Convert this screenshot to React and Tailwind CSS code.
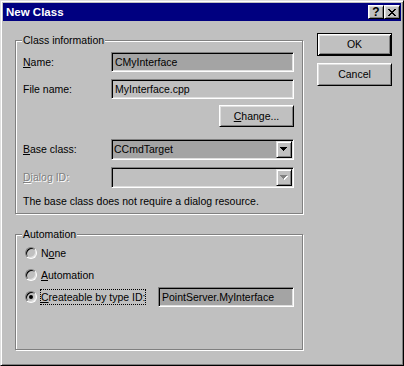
import React from "react";

const raised =
  "border border-t-white border-l-white border-r-black border-b-black shadow-[inset_1px_1px_0_#dfdfdf,inset_-1px_-1px_0_#808080]";
const sunken =
  "border border-t-[#808080] border-l-[#808080] border-r-white border-b-white shadow-[inset_1px_1px_0_#000,inset_-1px_-1px_0_#dfdfdf]";
const group =
  "relative w-[288px] border border-[#808080] shadow-[1px_1px_0_#fff,inset_1px_1px_0_#fff]";

function Arrow({ disabled }) {
  const rows = [
    [0, 7],
    [1, 5],
    [2, 3],
    [3, 1],
  ];
  return (
    <svg width="8" height="5" viewBox="0 0 8 5" shapeRendering="crispEdges">
      {disabled &&
        rows.map(([y, w], i) => (
          <rect key={"s" + i} x={y + 1} y={y + 1} width={w} height="1" fill="#fff" />
        ))}
      {rows.map(([y, w], i) => (
        <rect key={i} x={y} y={y} width={w} height="1" fill={disabled ? "#808080" : "#000"} />
      ))}
    </svg>
  );
}

function Combo({ value, disabled, bg }) {
  return (
    <div className={`flex-1 h-full flex items-stretch ${sunken} ${bg} p-[1px]`}>
      <div className="flex-1 flex items-center pl-[1px] leading-[13px]">{value}</div>
      <div className={`w-[16px] flex items-center justify-center bg-[#c0c0c0] border border-t-[#dfdfdf] border-l-[#dfdfdf] border-r-black border-b-black shadow-[inset_1px_1px_0_#fff,inset_-1px_-1px_0_#808080]`}>
        <Arrow disabled={disabled} />
      </div>
    </div>
  );
}

function Radio({ checked, label, mnemonicIndex, focused }) {
  const before = label.slice(0, mnemonicIndex);
  const m = label[mnemonicIndex];
  const after = label.slice(mnemonicIndex + 1);
  return (
    <div className="flex items-center">
      <div className="w-[12px] h-[12px] rounded-full border border-t-[#808080] border-l-[#808080] border-r-white border-b-white shadow-[inset_1px_1px_0_#000,inset_-1px_-1px_0_#dfdfdf] bg-[#c0c0c0] flex items-center justify-center">
        {checked && <div className="w-[4px] h-[4px] rounded-full bg-black" />}
      </div>
      <span
        className={`ml-[3px] h-[16px] flex items-center leading-[13px] border ${
          focused ? "border-dotted border-black" : "border-transparent"
        }`}
      >
        {before}
        <span className="underline underline-offset-[1px]">{m}</span>
        {after}
      </span>
    </div>
  );
}

export default function App() {
  return (
    <div className="w-[404px] h-[366px] bg-[#c0c0c0] font-['Liberation_Sans',Arial,sans-serif] text-[10.5px] text-black border border-t-[#dfdfdf] border-l-[#dfdfdf] border-r-black border-b-black shadow-[inset_1px_1px_0_#fff,inset_-1px_-1px_0_#808080] p-[2px] flex flex-col">
      {/* Title bar */}
      <div className="h-[18px] bg-[#000080] flex items-center justify-between pl-[3px] pr-[1px]">
        <span className="text-white font-bold text-[11.5px] leading-[14px]">New Class</span>
        <div className="flex">
          <div className={`w-[16px] h-[14px] bg-[#c0c0c0] ${raised} flex items-center justify-center font-bold text-[12px] leading-[11px]`}>
            ?
          </div>
          <div className={`w-[16px] h-[14px] bg-[#c0c0c0] ${raised} flex items-center justify-center`}>
            <svg width="8" height="7" viewBox="0 0 8 7" shapeRendering="crispEdges">
              <rect x="0" y="0" width="2" height="1" />
              <rect x="6" y="0" width="2" height="1" />
              <rect x="1" y="1" width="2" height="1" />
              <rect x="5" y="1" width="2" height="1" />
              <rect x="2" y="2" width="4" height="1" />
              <rect x="3" y="3" width="2" height="1" />
              <rect x="2" y="4" width="4" height="1" />
              <rect x="1" y="5" width="2" height="1" />
              <rect x="5" y="5" width="2" height="1" />
              <rect x="0" y="6" width="2" height="1" />
              <rect x="6" y="6" width="2" height="1" />
            </svg>
          </div>
        </div>
      </div>

      {/* Body */}
      <div className="flex pl-[12px]">
        <div className="flex flex-col">
          {/* Class information */}
          <div className={`${group} h-[174px] mt-[19px]`}>
            <span className="absolute -top-[7px] left-[6px] px-[1px] bg-[#c0c0c0] leading-[13px]">
              Class information
            </span>
            <div className="flex flex-col pt-[11px] pl-[7px] pr-[8px]">
              <div className="flex items-center h-[20px]">
                <span className="w-[88px] leading-[13px]">
                  <span className="underline underline-offset-[1px]">N</span>ame:
                </span>
                <div className={`flex-1 h-full ${sunken} bg-[#a4a4a4] flex items-center pl-[3px] leading-[13px]`}>
                  CMyInterface
                </div>
              </div>
              <div className="flex items-center h-[20px] mt-[7px]">
                <span className="w-[88px] leading-[13px]">File name:</span>
                <div className={`flex-1 h-full ${sunken} bg-[#c0c0c0] flex items-center pl-[3px] leading-[13px]`}>
                  MyInterface.cpp
                </div>
              </div>
              <div className="flex justify-end h-[22px] mt-[6px]">
                <div className={`w-[75px] h-full ${raised} flex items-center justify-center leading-[13px]`}>
                  <span>
                    <span className="underline underline-offset-[1px]">C</span>hange...
                  </span>
                </div>
              </div>
              <div className="flex items-center h-[21px] mt-[12px]">
                <span className="w-[88px] leading-[13px]">
                  <span className="underline underline-offset-[1px]">B</span>ase class:
                </span>
                <Combo value="CCmdTarget" bg="bg-[#a4a4a4]" />
              </div>
              <div className="flex items-center h-[21px] mt-[7px]">
                <span className="w-[88px] leading-[13px] text-[#808080] [text-shadow:1px_1px_0_#fff]">
                  <span className="underline underline-offset-[1px]">D</span>ialog ID:
                </span>
                <Combo value="" disabled bg="bg-[#c0c0c0]" />
              </div>
              <div className="h-[13px] leading-[13px] mt-[7px]">
                The base class does not require a dialog resource.
              </div>
            </div>
          </div>

          {/* Automation */}
          <div className={`${group} h-[116px] mt-[20px]`}>
            <span className="absolute -top-[7px] left-[6px] px-[1px] bg-[#c0c0c0] leading-[13px]">
              Automation
            </span>
            <div className="flex flex-col pt-[8px] pl-[9px] pr-[8px] gap-[2px]">
              <div className="h-[20px] flex items-center">
                <Radio label="None" mnemonicIndex={1} />
              </div>
              <div className="h-[20px] flex items-center">
                <Radio label="Automation" mnemonicIndex={0} />
              </div>
              <div className="h-[20px] flex items-center">
                <Radio label="Createable by type ID:" mnemonicIndex={0} checked focused />
                <div className={`ml-auto w-[136px] h-full ${sunken} bg-[#a4a4a4] flex items-center pl-[3px] leading-[13px]`}>
                  PointServer.MyInterface
                </div>
              </div>
            </div>
          </div>
        </div>

        {/* Buttons */}
        <div className="flex flex-col ml-[14px] mt-[12px] gap-[7px]">
          <div className="w-[75px] h-[23px] border border-black shadow-[inset_1px_1px_0_#fff,inset_-1px_-1px_0_#000,inset_2px_2px_0_#dfdfdf,inset_-2px_-2px_0_#808080] flex items-center justify-center leading-[13px]">
            OK
          </div>
          <div className={`w-[75px] h-[23px] ${raised} flex items-center justify-center leading-[13px]`}>
            Cancel
          </div>
        </div>
      </div>
    </div>
  );
}
